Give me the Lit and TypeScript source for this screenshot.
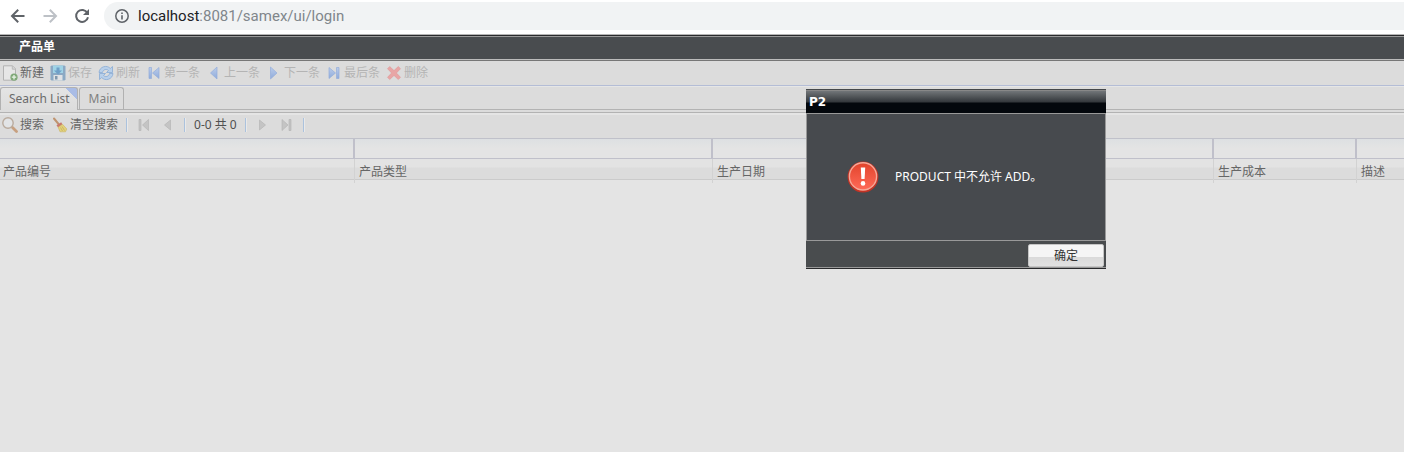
import { LitElement, html, css, svg, nothing } from "lit";
import { customElement, property, state } from "lit/decorators.js";

const g = (id: string, a: string, b: string) => svg`
  <linearGradient id=${id} x1="0" y1="0" x2="0" y2="1">
    <stop offset="0" stop-color=${a} /><stop offset="1" stop-color=${b} />
  </linearGradient>`;

const glyphs: Record<string, unknown> = {
  back: svg`<path d="M14.500 8H2.500M8.200 1.800L2 8l6.200 6.200" fill="none" stroke="#5f6368" stroke-width="2"/>`,
  forward: svg`<path d="M1.500 8h12M7.800 1.800L14 8l-6.200 6.200" fill="none" stroke="#bdc1c6" stroke-width="2"/>`,
  reload: svg`<path d="M13.400 5A6 6 0 1 0 14 9.200" fill="none" stroke="#5f6368" stroke-width="2"/><path d="M15 1v6H9z" fill="#5f6368"/>`,
  info: svg`<circle cx="8" cy="8" r="6.200" fill="none" stroke="#5f6368" stroke-width="1.500"/><path d="M7.200 7.200h1.600v4.300H7.200zM7.200 4.500h1.600v1.600H7.200z" fill="#5f6368"/>`,
  add: svg`<path d="M1.500.8h9l3 3v11.400h-12z" fill="#e6e6e6" stroke="#b3b3b3"/><path d="M10.300.8v3.400h3.200" fill="#d4d4d4" stroke="#bbb"/><circle cx="12" cy="12.200" r="3.600" fill="#7fa878"/><path d="M12 10v4.400M9.800 12.200h4.400" stroke="#e9f3e6" stroke-width="1.300"/>`,
  save: svg`<path d="M1.500.5h13l1 1v13l-1 1h-13l-1-1v-13z" fill="#8ba9c4"/><path d="M3 .5h10v7.500H3z" fill="#9fd3e6"/><path d="M3.500 10h9v5.500h-9z" fill="#dfe2e5"/><path d="M5 11h2.500v3.500H5z" fill="#8098ad"/><path d="M6.500 2.500h3v3H12L8 9.500 4 5.500h2.500z" fill="#6fa0c8"/>`,
  refresh: svg`<path d="M1 7.500C1.500 1.500 9 -.5 12.300 3.500L14.500 1.500v6H8.500l2-2C8.500 3.500 5 4.500 4.500 7.500z" fill="#b9d0ea" stroke="#88abd6" stroke-width=".8"/><path d="M15 8.500C14.500 14.500 7 16.500 3.700 12.500L1.500 14.500v-6h6l-2 2C7.500 12.500 11 11.500 11.500 8.500z" fill="#b9d0ea" stroke="#88abd6" stroke-width=".8"/>`,
  first: svg`${g("gf", "#bccdea", "#8fabdb")}<path d="M3 2.500h2.500v11H3zM13 2.500v11L6.500 8z" fill="url(#gf)" stroke="#94aedb" stroke-width=".7"/>`,
  prev: svg`${g("gp", "#bccdea", "#8fabdb")}<path d="M11 2v12L4.500 8z" fill="url(#gp)" stroke="#94aedb" stroke-width=".7"/>`,
  next: svg`${g("gn", "#bccdea", "#8fabdb")}<path d="M4.500 2v12L11 8z" fill="url(#gn)" stroke="#94aedb" stroke-width=".7"/>`,
  last: svg`${g("gl", "#bccdea", "#8fabdb")}<path d="M10.500 2.500H13v11h-2.500zM3 2.500v11L9.500 8z" fill="url(#gl)" stroke="#94aedb" stroke-width=".7"/>`,
  remove: svg`<path d="M3.700 1.500L8 5.600l4.300-4.100 2.200 2.200L10.400 8l4.100 4.300-2.200 2.200L8 10.400l-4.300 4.100-2.200-2.200L5.600 8 1.500 3.700z" fill="#e8a5a5" stroke="#df9696" stroke-width=".6"/>`,
  search: svg`<path d="M10.500 10.500l4 4" stroke="#c7a080" stroke-width="2.800" stroke-linecap="round"/><circle cx="6" cy="6" r="5.200" fill="#e2e4e6" stroke="#b9ab9e" stroke-width="1.400"/>`,
  broom: svg`<path d="M2 1.500l4.500 5.500" stroke="#bf9470" stroke-width="2" stroke-linecap="round"/><path d="M4.500 8.200l4.700-3 1.300 2.200-4.400 3z" fill="#c9796c"/><path d="M6.200 10.300l4.300-3 4.300 4.700-1.300 2.800H8z" fill="#e3d27c" stroke="#c9b462" stroke-width=".6"/><path d="M8.500 10.500l2 3.500M10 9.500l2.500 4" stroke="#c2ac58" stroke-width=".7"/>`,
  pfirst: svg`<path d="M3 2.500h2v11H3zM12.500 2.500v11L6.500 8z" fill="#c4c4c4" stroke="#b2b2b2" stroke-width=".6"/>`,
  pprev: svg`<path d="M10.500 3v10L4.500 8z" fill="#c4c4c4" stroke="#b2b2b2" stroke-width=".6"/>`,
  pnext: svg`<path d="M4.500 3v10L10.500 8z" fill="#c4c4c4" stroke="#b2b2b2" stroke-width=".6"/>`,
  plast: svg`<path d="M10 2.500h2v11h-2zM3 2.500v11L9 8z" fill="#c4c4c4" stroke="#b2b2b2" stroke-width=".6"/>`,
  alert: svg`${g("ga", "#e2442c", "#ff6a58")}<circle cx="8" cy="8" r="7.700" fill="#c23325"/><circle cx="8" cy="7.700" r="6.800" fill="url(#ga)" stroke="#f5a898" stroke-width=".7"/><path d="M6.900 3.300h2.200L8.800 9H7.200z" fill="#fff"/><circle cx="8" cy="11.200" r="1.150" fill="#fff"/>`,
};

@customElement("ui-icon")
class UiIcon extends LitElement {
  @property() name = "";
  static styles = css`
    :host { display: block; width: 16px; height: 16px; flex: none; }
    .glyph { display: block; width: 100%; height: 100%; }
  `;
  render() {
    return html`<svg class="glyph" viewBox="0 0 16 16" aria-hidden="true">${glyphs[this.name]}</svg>`;
  }
}

@customElement("app-root")
class AppRoot extends LitElement {
  @state() private open = true;

  private actions = [
    { icon: "add", label: "新建", on: true },
    { icon: "save", label: "保存" },
    { icon: "refresh", label: "刷新" },
    { icon: "first", label: "第一条" },
    { icon: "prev", label: "上一条" },
    { icon: "next", label: "下一条" },
    { icon: "last", label: "最后条" },
    { icon: "remove", label: "删除" },
  ];

  private columns = [
    { label: "产品编号", width: "355px" },
    { label: "产品类型", width: "358px" },
    { label: "生产日期", width: "501px" },
    { label: "生产成本", width: "143px" },
    { label: "描述", width: "auto" },
  ];

  static styles = css`
    :host {
      display: flex; flex-direction: column; position: relative; min-height: 100vh;
      overflow: hidden; background: #e4e4e4; color: #666;
      font: 12px/16px "Noto Sans", "Noto Sans CJK SC", sans-serif;
    }
    * { box-sizing: border-box; }
    button, input { font: inherit; color: inherit; background: none; border: 0; margin: 0; padding: 0; }
    button { display: flex; align-items: center; white-space: nowrap; }
    .browser { display: flex; align-items: center; gap: 14px; height: 34px; padding: 0 0 2px 10px; background: #fff; }
    .nav { display: flex; gap: 16px; }
    .address { display: flex; align-items: center; gap: 8px; flex: 1; height: 28px; padding-left: 10px;
      border-radius: 14px 0 0 14px; background: #f1f3f4; color: #80868b; font: 15px/20px Roboto, sans-serif; }
    .host { color: #202124; }
    .title { margin: 0; height: 27px; padding: 2px 19px 0; background: #494c4f; color: #fff;
      border-top: 1px solid #b5b5b5; border-bottom: 1px solid #777; box-shadow: inset 0 1px #292a2c, inset 0 2px #999, inset 0 -1px #bbb;
      font-size: 12px; line-height: 20px; font-weight: 700; }
    .bar { display: flex; align-items: center; height: 25px; padding: 0 2px; background: #dcdcdc; }
    .actions { gap: 6px; border-bottom: 1px solid #b4bdd6; }
    .item { gap: 2px; }
    .item:disabled { color: #b4b4b4; }
    .tabs { display: flex; gap: 1px; height: 24px; background: #dcdcdc; border-bottom: 1px solid #b3b3b3; border-top: 1px solid #e6e6e6; }
    .tab { height: 23px; padding: 0 6px 0 9px; border: 1px solid #b1b1b1; border-bottom: 0; border-radius: 3px 3px 0 0; color: #808080; }
    .tab.current { padding: 0 7px 0 8px; height: 23px; color: #6a6a6a;
      background: linear-gradient(225deg, #a9bce6 0 8px, transparent 8px), linear-gradient(#e4e4e4, #dcdcdc); }
    .pager { gap: 8px; height: 29px; border-top: 2px solid #dcdcdc; border-bottom: 1px solid #c0c1ca; box-shadow: inset 0 1px #b3b3b3, inset 0 3px #e5e5e5; }
    .sep { width: 2px; height: 14px; background: linear-gradient(90deg, #abc2dd 50%, #e9e9e9 50%); }
    .count { color: #505050; }
    .grid { width: 100%; table-layout: fixed; border-collapse: separate; border-spacing: 0; }
    .filter { height: 20px; padding: 0; border-right: 2px solid #c0c0ca; border-bottom: 1px solid #c0c0ca; background: linear-gradient(#dde0e2, #e4e4e4 50%); }
    .filter:last-child, .head:last-child { border-right: 0; }
    .field { display: block; width: 100%; height: 18px; outline: 0; }
    .head { height: 24px; padding: 2px 4px 0; font-weight: 400; text-align: left; border-right: 1px solid #d2d2d2;
      background: linear-gradient(#e3e3e3 0 8px, #dcdcdc 9px 20px, #cbcbcb 20px 21px, #e4e4e4 21px); }
    .head:first-child { padding-left: 3px; }
    .dialog { position: absolute; left: 806px; top: 89px; width: 300px; display: flex; flex-direction: column;
      background: #474a4e; color: #fff; }
    .caption { margin: 0; height: 24px; padding: 0 3px; border-top: 1px solid #45484b; box-shadow: inset 0 1px #888;
      background: linear-gradient(#777b7e, #33373b 12px, #03070c 13px);
      font: 700 12px/24px "DejaVu Sans", sans-serif; }
    .message { display: flex; align-items: center; gap: 16px; height: 128px; margin: 0; padding: 0 40px; border: 1px solid #999; }
    .alert { width: 32px; height: 32px; }
    .footer { display: flex; justify-content: flex-end; height: 28px; padding: 3px 2px; background: #494c4e; border-bottom: 1px solid #292a2c; box-shadow: inset 0 -1px #999; }
    .ok { justify-content: center; width: 76px; height: 23px; border: 1px solid #c5c5c5; border-radius: 2px; color: #333;
      background: linear-gradient(#f5f5f5 0 56%, #dadada 58%, #e2e2e2); }
  `;

  private pageButton(icon: string, label: string) {
    return html`<button class="page" disabled aria-label=${label}><ui-icon name=${icon}></ui-icon></button>`;
  }

  render() {
    return html`
      <header class="browser">
        <nav class="nav">
          <button aria-label="后退"><ui-icon name="back"></ui-icon></button>
          <button aria-label="前进"><ui-icon name="forward"></ui-icon></button>
          <button aria-label="重新加载"><ui-icon name="reload"></ui-icon></button>
        </nav>
        <div class="address"><ui-icon name="info"></ui-icon><span><span class="host">localhost</span>:8081/samex/ui/login</span></div>
      </header>
      <h1 class="title">产品单</h1>
      <div class="bar actions" role="toolbar">
        ${this.actions.map((a) => html`<button class="item" ?disabled=${!a.on}><ui-icon name=${a.icon}></ui-icon>${a.label}</button>`)}
      </div>
      <div class="tabs" role="tablist">
        <button class="tab current" role="tab" aria-selected="true">Search List</button>
        <button class="tab" role="tab">Main</button>
      </div>
      <div class="bar pager" role="toolbar">
        <button class="item"><ui-icon name="search"></ui-icon>搜索</button>
        <button class="item"><ui-icon name="broom"></ui-icon>清空搜索</button>
        <span class="sep"></span>
        ${this.pageButton("pfirst", "首页")}${this.pageButton("pprev", "上一页")}
        <span class="sep"></span>
        <span class="count">0-0 共 0</span>
        <span class="sep"></span>
        ${this.pageButton("pnext", "下一页")}${this.pageButton("plast", "末页")}
        <span class="sep"></span>
      </div>
      <table class="grid">
        <colgroup>${this.columns.map((c) => html`<col style="width:${c.width}" />`)}</colgroup>
        <thead>
          <tr>${this.columns.map((c) => html`<td class="filter"><input class="field" aria-label=${c.label} /></td>`)}</tr>
          <tr>${this.columns.map((c) => html`<th class="head" scope="col">${c.label}</th>`)}</tr>
        </thead>
      </table>
      ${this.open
        ? html`<section class="dialog" role="alertdialog" aria-label="P2">
            <h2 class="caption">P2</h2>
            <p class="message"><ui-icon class="alert" name="alert"></ui-icon>PRODUCT 中不允许 ADD。</p>
            <div class="footer"><button class="ok" @click=${() => (this.open = false)}>确定</button></div>
          </section>`
        : nothing}
    `;
  }
}
